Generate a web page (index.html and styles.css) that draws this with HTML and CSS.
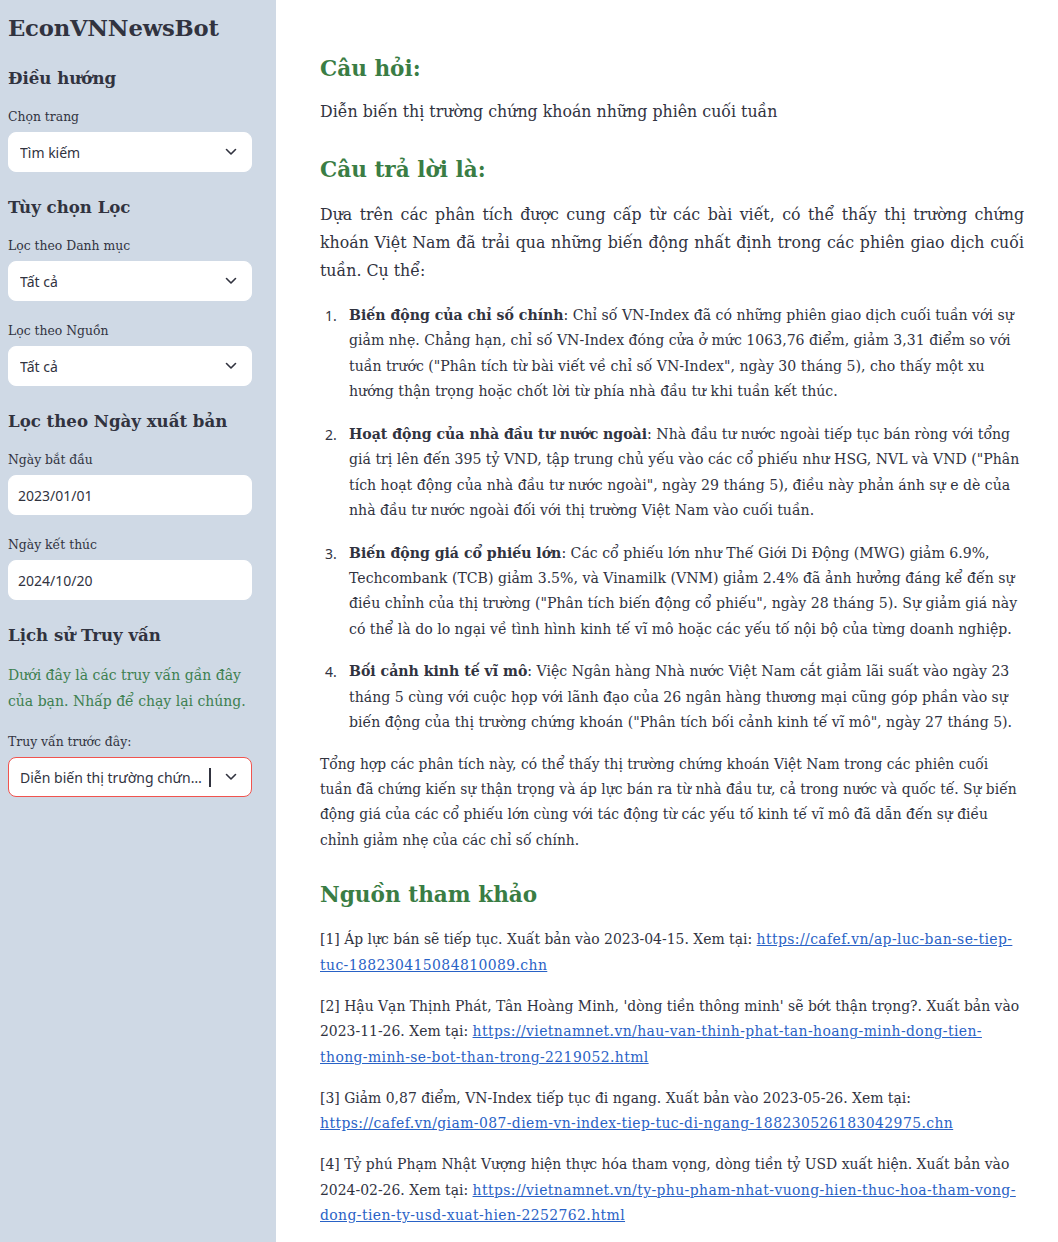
FILE: index.html
```html
<!DOCTYPE html>
<html lang="vi">
<head>
<meta charset="utf-8">
<title>EconVNNewsBot</title>
<link rel="stylesheet" href="styles.css">
</head>
<body>
<div class="app">
  <aside class="sidebar">
    <h1 class="brand">EconVNNewsBot</h1>

    <h2 class="side-h">Điều hướng</h2>
    <div class="field">
      <div class="label">Chọn trang</div>
      <div class="select"><span class="val">Tìm kiếm</span><svg class="chev" viewBox="0 0 12 8" width="12" height="8"><path d="M1.5 1.5 6 6l4.5-4.5" fill="none" stroke="#31333f" stroke-width="1.6" stroke-linecap="round" stroke-linejoin="round"/></svg></div>
    </div>

    <h2 class="side-h">Tùy chọn Lọc</h2>
    <div class="field">
      <div class="label">Lọc theo Danh mục</div>
      <div class="select"><span class="val">Tất cả</span><svg class="chev" viewBox="0 0 12 8" width="12" height="8"><path d="M1.5 1.5 6 6l4.5-4.5" fill="none" stroke="#31333f" stroke-width="1.6" stroke-linecap="round" stroke-linejoin="round"/></svg></div>
    </div>
    <div class="field">
      <div class="label">Lọc theo Nguồn</div>
      <div class="select"><span class="val">Tất cả</span><svg class="chev" viewBox="0 0 12 8" width="12" height="8"><path d="M1.5 1.5 6 6l4.5-4.5" fill="none" stroke="#31333f" stroke-width="1.6" stroke-linecap="round" stroke-linejoin="round"/></svg></div>
    </div>

    <h2 class="side-h">Lọc theo Ngày xuất bản</h2>
    <div class="field">
      <div class="label">Ngày bắt đầu</div>
      <div class="select date"><span class="val">2023/01/01</span></div>
    </div>
    <div class="field">
      <div class="label">Ngày kết thúc</div>
      <div class="select date"><span class="val">2024/10/20</span></div>
    </div>

    <h2 class="side-h">Lịch sử Truy vấn</h2>
    <p class="side-note">Dưới đây là các truy vấn gần đây của bạn. Nhấp để chạy lại chúng.</p>
    <div class="field">
      <div class="label">Truy vấn trước đây:</div>
      <div class="select focused"><span class="val ell">Diễn biến thị trường chứng khoán những phiên cuối tuần</span><span class="caret"></span><svg class="chev" viewBox="0 0 12 8" width="12" height="8"><path d="M1.5 1.5 6 6l4.5-4.5" fill="none" stroke="#31333f" stroke-width="1.6" stroke-linecap="round" stroke-linejoin="round"/></svg></div>
    </div>
  </aside>

  <main class="main">
    <h2 class="mh">Câu hỏi:</h2>
    <p class="question">Diễn biến thị trường chứng khoán những phiên cuối tuần</p>

    <h2 class="mh">Câu trả lời là:</h2>
    <p class="lead">Dựa trên các phân tích được cung cấp từ các bài viết, có thể thấy thị trường chứng khoán Việt Nam đã trải qua những biến động nhất định trong các phiên giao dịch cuối tuần. Cụ thể:</p>

    <ol class="points">
      <li><b>Biến động của chỉ số chính</b>: Chỉ số VN-Index đã có những phiên giao dịch cuối tuần với sự giảm nhẹ. Chẳng hạn, chỉ số VN-Index đóng cửa ở mức 1063,76 điểm, giảm 3,31 điểm so với tuần trước ("Phân tích từ bài viết về chỉ số VN-Index", ngày 30 tháng 5), cho thấy một xu hướng thận trọng hoặc chốt lời từ phía nhà đầu tư khi tuần kết thúc.</li>
      <li><b>Hoạt động của nhà đầu tư nước ngoài</b>: Nhà đầu tư nước ngoài tiếp tục bán ròng với tổng giá trị lên đến 395 tỷ VND, tập trung chủ yếu vào các cổ phiếu như HSG, NVL và VND ("Phân tích hoạt động của nhà đầu tư nước ngoài", ngày 29 tháng 5), điều này phản ánh sự e dè của nhà đầu tư nước ngoài đối với thị trường Việt Nam vào cuối tuần.</li>
      <li><b>Biến động giá cổ phiếu lớn</b>: Các cổ phiếu lớn như Thế Giới Di Động (MWG) giảm 6.9%, Techcombank (TCB) giảm 3.5%, và Vinamilk (VNM) giảm 2.4% đã ảnh hưởng đáng kể đến sự điều chỉnh của thị trường ("Phân tích biến động cổ phiếu", ngày 28 tháng 5). Sự giảm giá này có thể là do lo ngại về tình hình kinh tế vĩ mô hoặc các yếu tố nội bộ của từng doanh nghiệp.</li>
      <li><b>Bối cảnh kinh tế vĩ mô</b>: Việc Ngân hàng Nhà nước Việt Nam cắt giảm lãi suất vào ngày 23 tháng 5 cùng với cuộc họp với lãnh đạo của 26 ngân hàng thương mại cũng góp phần vào sự biến động của thị trường chứng khoán ("Phân tích bối cảnh kinh tế vĩ mô", ngày 27 tháng 5).</li>
    </ol>

    <p class="body">Tổng hợp các phân tích này, có thể thấy thị trường chứng khoán Việt Nam trong các phiên cuối tuần đã chứng kiến sự thận trọng và áp lực bán ra từ nhà đầu tư, cả trong nước và quốc tế. Sự biến động giá của các cổ phiếu lớn cùng với tác động từ các yếu tố kinh tế vĩ mô đã dẫn đến sự điều chỉnh giảm nhẹ của các chỉ số chính.</p>

    <h2 class="mh refs-h">Nguồn tham khảo</h2>
    <p class="ref">[1] Áp lực bán sẽ tiếp tục. Xuất bản vào 2023-04-15. Xem tại: <a href="#">https://cafef.vn/ap-luc-ban-se-tiep-tuc-188230415084810089.chn</a></p>
    <p class="ref">[2] Hậu Vạn Thịnh Phát, Tân Hoàng Minh, 'dòng tiền thông minh' sẽ bớt thận trọng?. Xuất bản vào 2023-11-26. Xem tại: <a href="#">https://vietnamnet.vn/hau-van-thinh-phat-tan-hoang-minh-dong-tien-thong-minh-se-bot-than-trong-2219052.html</a></p>
    <p class="ref">[3] Giảm 0,87 điểm, VN-Index tiếp tục đi ngang. Xuất bản vào 2023-05-26. Xem tại: <a href="#">https://cafef.vn/giam-087-diem-vn-index-tiep-tuc-di-ngang-188230526183042975.chn</a></p>
    <p class="ref">[4] Tỷ phú Phạm Nhật Vượng hiện thực hóa tham vọng, dòng tiền tỷ USD xuất hiện. Xuất bản vào 2024-02-26. Xem tại: <a href="#">https://vietnamnet.vn/ty-phu-pham-nhat-vuong-hien-thuc-hoa-tham-vong-dong-tien-ty-usd-xuat-hien-2252762.html</a></p>
  </main>
</div>
</body>
</html>
```

FILE: styles.css
```css
* { box-sizing: border-box; }
html, body { margin: 0; padding: 0; }
body {
  width: 1058px;
  height: 1242px;
  overflow: hidden;
  background: #ffffff;
  color: #31333f;
  font-family: "DejaVu Serif", serif;
}
.app {
  display: flex;
  height: 1242px;
}
.sidebar {
  width: 276px;
  flex: none;
  background: #cfd9e5;
  padding: 12px 24px 0 8px;
}
.brand {
  margin: 0 0 20px;
  font-size: 22.7px;
  line-height: 32px;
  font-weight: 700;
  letter-spacing: -0.2px;
}
.side-h {
  margin: 0 0 15px;
  font-size: 16.6px;
  line-height: 28px;
  font-weight: 700;
}
.field { margin-bottom: 20px; }
.field + .side-h { margin-top: 21px; }
.field:has(+ .side-h) { margin-bottom: 0; }
.label {
  font-size: 12.4px;
  line-height: 20px;
  margin-bottom: 5px;
}
.select {
  height: 40px;
  background: #fff;
  border-radius: 8px;
  display: flex;
  align-items: center;
  padding: 0 14px 0 11px;
  font-family: "Noto Sans", sans-serif;
  font-size: 14px;
  color: #31333f;
  border: 1px solid #fff;
}
.select .val { flex: 1; white-space: nowrap; overflow: hidden; }
.select .val.ell { text-overflow: ellipsis; flex: 0 1 auto; }
.select.date { padding-left: 9px; }
.select.focused { border-color: #f0544f; padding-right: 14px; }
.caret {
  width: 2px;
  height: 19px;
  background: #31333f;
  margin: 0 14px 0 4px;
  flex: none;
}
.chev { flex: none; margin-left: auto; }
.side-note {
  margin: -2px 0 18px;
  color: #3d8050;
  font-size: 14px;
  line-height: 26px;
}

.main {
  flex: 1;
  padding: 51px 34px 0 44px;
}
.mh {
  margin: 0;
  color: #3a7d44;
  font-size: 21.6px;
  line-height: 36px;
  font-weight: 700;
}
.question {
  margin: 11px 0 26px;
  font-size: 15.8px;
  line-height: 28px;
}
.lead {
  margin: 13px 0 18px;
  font-size: 15.8px;
  line-height: 28px;
  text-align: justify;
}
.points {
  margin: 0 0 16px;
  padding-left: 29px;
  list-style: none;
  counter-reset: pt;
  font-size: 14.1px;
  line-height: 25.4px;
}
.points li {
  position: relative;
  counter-increment: pt;
  margin-bottom: 17.2px;
}
.points li:last-child { margin-bottom: 0; }
.points li::before {
  content: counter(pt) ".";
  position: absolute;
  left: -24px;
  top: 0;
  font-family: "Noto Sans", sans-serif;
  font-size: 14px;
}
.body {
  margin: 0 0 24px;
  font-size: 13.85px;
  line-height: 25.4px;
}
.refs-h { margin-bottom: 14px; }
.ref {
  margin: 0 0 15.5px;
  font-size: 13.95px;
  line-height: 25.5px;
}
.ref a {
  color: #2962c6;
  text-decoration: underline;
  letter-spacing: 0.4px;
}
```
